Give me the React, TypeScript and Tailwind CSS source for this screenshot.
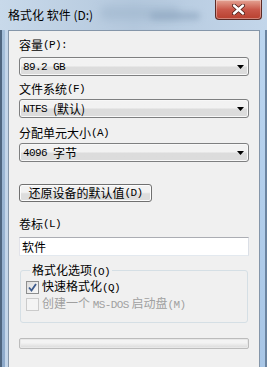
import React from 'react';

const M: React.FC<{ children: React.ReactNode; className?: string }> = ({ children, className = '' }) => (
  <span className={`font-['Liberation_Mono',monospace] text-[11px] tracking-[-0.6px] ${className}`}>{children}</span>
);

const Arrow = () => (
  <svg width="7" height="4" viewBox="0 0 7 4" className="mr-[4px]">
    <path d="M0 0 H7 L3.5 4 Z" fill="#000" />
  </svg>
);

const Combo: React.FC<{ children: React.ReactNode; className?: string }> = ({ children, className = '' }) => (
  <div
    className={`h-[19px] flex items-center justify-between rounded-[3px] border border-[#7e7f80] bg-gradient-to-b from-[#f2f2f2] from-45% to-[#dcdcdc] to-55% pl-[3px] shadow-[inset_0_0_0_1px_#f8f8f8] ${className}`}
  >
    <div className="flex items-center leading-[16px]">{children}</div>
    <Arrow />
  </div>
);

const Label: React.FC<{ children: React.ReactNode; className?: string }> = ({ children, className = '' }) => (
  <div className={`h-[16px] leading-[16px] flex items-center ${className}`}>{children}</div>
);

export default function App() {
  return (
    <div className="w-[267px] h-[367px] flex flex-col overflow-hidden text-[12px] text-black font-['Noto_Sans_CJK_SC',sans-serif] bg-[#b9d1ea]">
      {/* title bar */}
      <div className="h-[30px] flex items-start relative bg-gradient-to-r from-[#c8d9ea] via-[#b4c8dd] to-[#c3d6ea]">
        <div className="pl-[8px] pt-[6px] leading-[18px] text-[12px] text-black">格式化 软件 (D:)</div>
        <div className="absolute left-[100px] top-[6px] w-[80px] h-[14px] rounded-full bg-[#9fb6cd] opacity-60 blur-[4px]" />
        <div className="absolute left-[150px] top-[12px] w-[50px] h-[8px] rounded-full bg-[#8aa3bd] opacity-60 blur-[3px]" />
        <div className="absolute right-[5px] top-0 w-[47px] h-[20px] rounded-b-[4px] border border-t-0 border-[#5c2a24] bg-gradient-to-b from-[#e4a394] via-[#c9584a] to-[#b8402f] flex items-center justify-center shadow-[inset_0_0_0_1px_rgba(255,255,255,0.35)]">
          <svg width="13" height="11" viewBox="0 0 13 11">
            <path d="M2 1.5 L11 9.5 M11 1.5 L2 9.5" stroke="#4a1a14" strokeWidth="4" strokeLinecap="round" />
            <path d="M2 1.5 L11 9.5 M11 1.5 L2 9.5" stroke="#fff" strokeWidth="2.4" strokeLinecap="round" />
          </svg>
        </div>
      </div>

      <div className="flex-1 flex">
        {/* left frame */}
        <div className="w-[8px] flex">
          <div className="w-[2px] bg-[#4f6680]" />
          <div className="w-[3px] bg-gradient-to-b from-[#a4bed9] to-[#8eaacb]" />
          <div className="w-[3px] bg-[#c4d6ea]" />
        </div>

        {/* panel */}
        <div className="flex-1 flex flex-col bg-[#f0f0f0] border-t border-l border-[#8596a9] px-[10px] pt-[6px]">
          <Label>
            容量<M>(P):</M>
          </Label>
          <Combo className="mt-[4px]">
            <M>89.2 GB</M>
          </Combo>

          <Label className="mt-[5px]">
            文件系统<M>(F)</M>
          </Label>
          <Combo className="mt-[2px]">
            <M>NTFS</M>
            <span className="ml-[6px]">(默认)</span>
          </Combo>

          <Label className="mt-[7px]">
            分配单元大小<M>(A)</M>
          </Label>
          <Combo className="mt-[2px]">
            <M>4096</M>
            <span className="ml-[6px]">字节</span>
          </Combo>

          <div className="mt-[22px] w-[133px] h-[18px] rounded-[3px] border border-[#707070] bg-gradient-to-b from-[#f2f2f2] from-45% to-[#dddddd] to-55% flex items-center justify-center shadow-[inset_0_0_0_1px_#fcfcfc] leading-[16px]">
            还原设备的默认值<M>(D)</M>
          </div>

          <Label className="mt-[14px]">
            卷标<M>(L)</M>
          </Label>
          <div className="mt-[5px] h-[19px] border border-[#abadb3] border-l-[#e2e3ea] border-r-[#dbdfe6] border-b-[#e3e9ef] bg-white pl-[2px] flex items-center leading-[16px]">
            软件
          </div>

          <fieldset className="mt-[6px] mx-[1px] border border-[#d5dfe5] rounded-[3px] px-[5px] pb-[6px] h-[61px]">
            <legend className="ml-[4px] px-[2px] leading-[16px] h-[16px]">
              格式化选项<M>(O)</M>
            </legend>
            <div className="flex items-center h-[14px] mt-[2px]">
              <div className="w-[13px] h-[13px] border border-[#8e8f8f] bg-gradient-to-br from-[#dcdcdc] to-[#fafafa] flex items-center justify-center">
                <svg width="9" height="9" viewBox="0 0 9 9">
                  <path d="M1 4.5 L3.5 7.5 L8 1" fill="none" stroke="#3c5a8c" strokeWidth="1.8" />
                </svg>
              </div>
              <span className="ml-[3px] leading-[16px]">
                快速格式化<M>(Q)</M>
              </span>
            </div>
            <div className="flex items-center h-[14px] mt-[3px] text-[#a0a0a0]">
              <div className="w-[13px] h-[13px] border border-[#cbcbcb] bg-[#f4f4f4]" />
              <span className="ml-[3px] leading-[16px]">
                创建一个 <M>MS-DOS</M> 启动盘<M>(M)</M>
              </span>
            </div>
          </fieldset>

          <div className="mt-[15px] h-[11px] rounded-[2px] border border-[#bcbcbc] bg-gradient-to-b from-[#f3f3f3] from-40% to-[#dadada] shadow-[inset_0_0_0_1px_#e8e8e8]" />
        </div>

        {/* right frame */}
        <div className="w-[8px] flex">
          <div className="w-[1px] bg-[#8596a9]" />
          <div className="w-[5px] bg-gradient-to-b from-[#bcd6f0] to-[#a8c6e6]" />
          <div className="w-[2px] bg-[#6b84a0]" />
        </div>
      </div>
    </div>
  );
}
